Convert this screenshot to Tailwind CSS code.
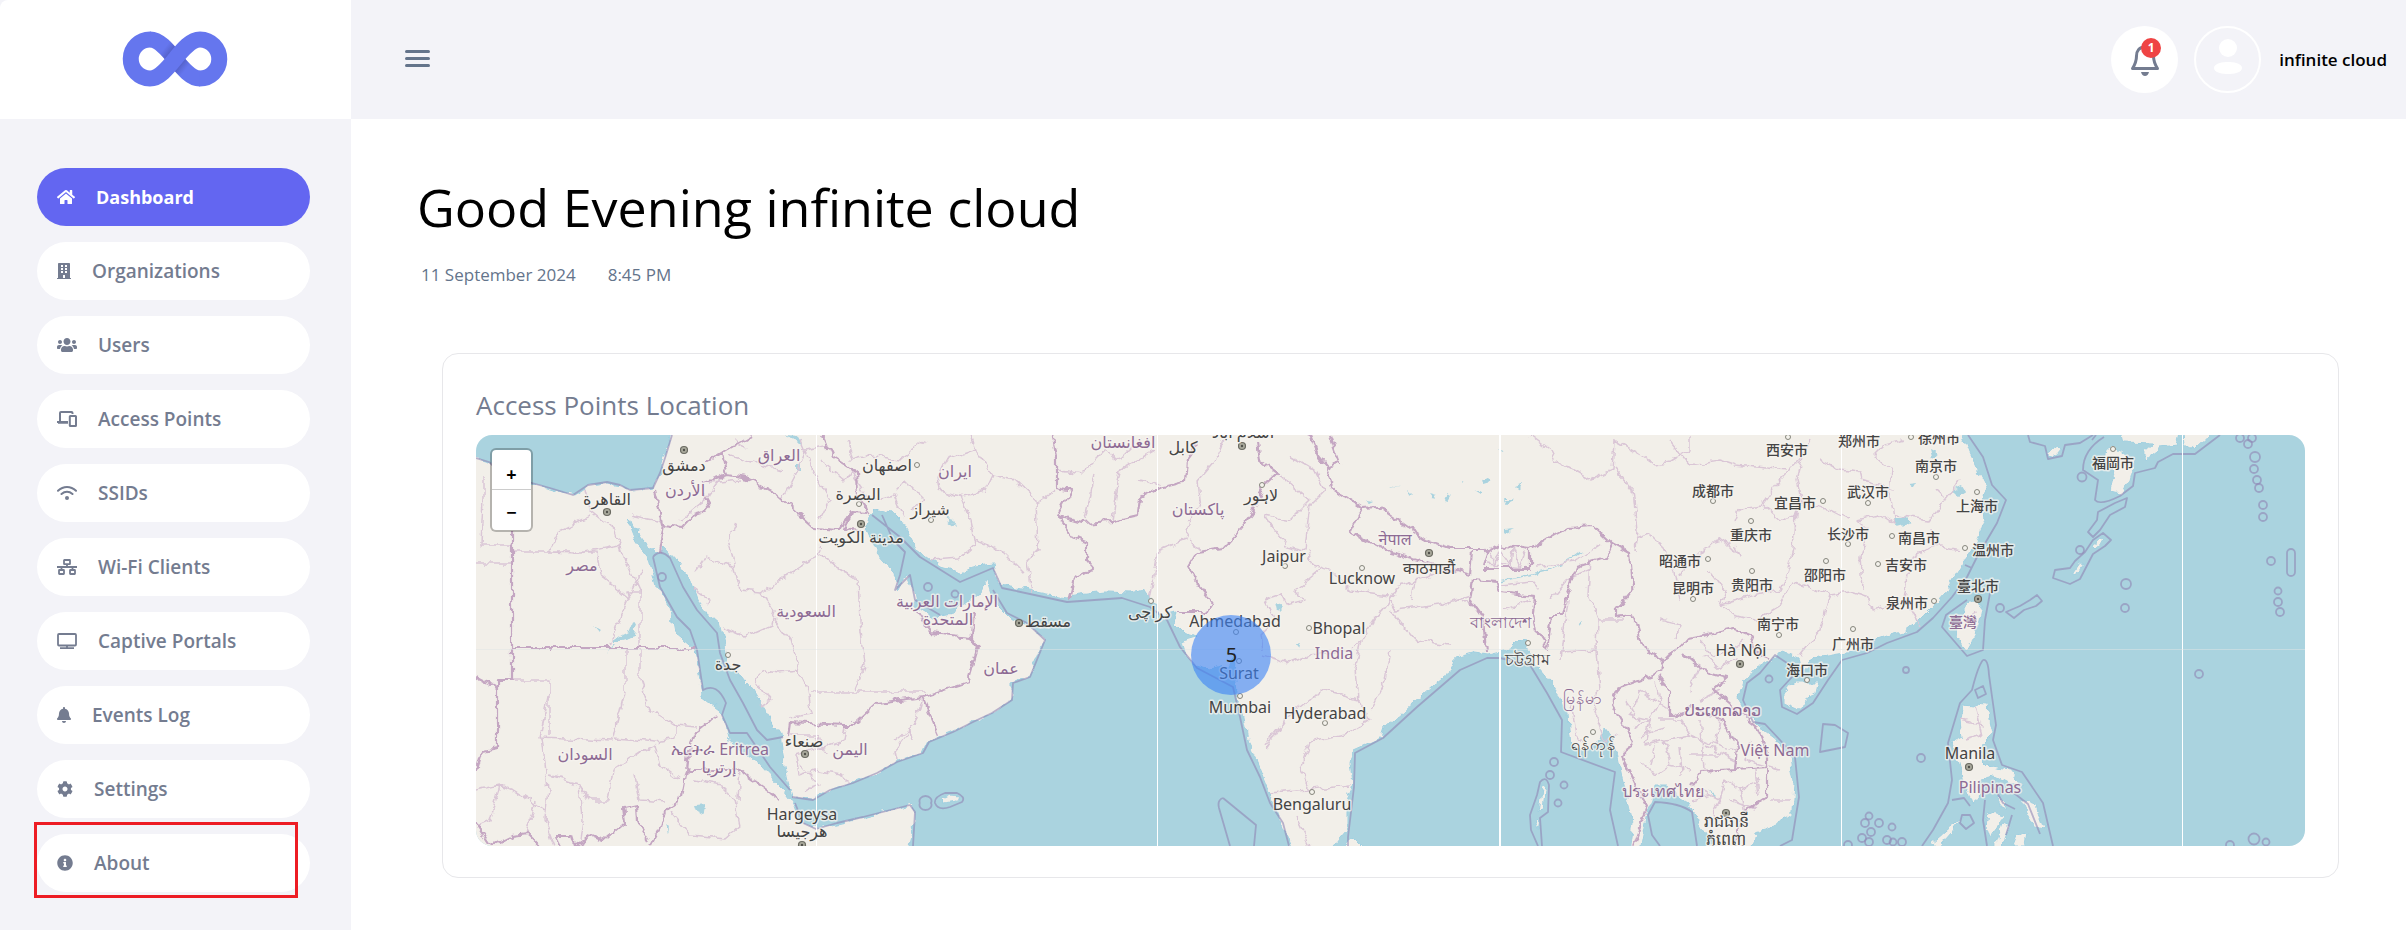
<!DOCTYPE html>
<html lang="en">
<head>
<meta charset="utf-8">
<title>Dashboard</title>
<script src="https://cdn.jsdelivr.net/npm/@tailwindcss/browser@4"></script>
</head>
<body class="bg-white font-['Open_Sans','Noto_Sans','Noto_Sans_CJK_SC',sans-serif] text-black">
<div class="flex min-h-screen">

  <!-- Sidebar -->
  <aside class="flex w-[351px] shrink-0 flex-col bg-[#f3f3f8]">
    <a href="#" aria-label="Home" class="flex h-[119px] items-center justify-center rounded-tl-lg bg-white pr-0.5 pb-0.5">
      <svg class="h-14 w-[106px]" viewBox="121.5 31.5 106 56" fill="none">
        <defs>
          <linearGradient id="s1" gradientUnits="userSpaceOnUse" x1="162" y1="51" x2="172" y2="59"><stop offset="0" stop-color="#4a55b5" stop-opacity="0"/><stop offset="1" stop-color="#4650a8"/></linearGradient>
          <linearGradient id="s2" gradientUnits="userSpaceOnUse" x1="187" y1="68" x2="177" y2="60"><stop offset="0" stop-color="#4a55b5" stop-opacity="0"/><stop offset="1" stop-color="#4650a8"/></linearGradient>
        </defs>
        <path d="M149.500 40C168 40 181 79 199.500 79" stroke="#6576ee" stroke-width="16"/>
        <path d="M149.500 40C168 40 181 79 199.500 79" stroke="url(#s1)" stroke-width="16" stroke-dasharray="32 100"/>
        <path d="M199.500 79C181 79 168 40 149.500 40" stroke="url(#s2)" stroke-width="16" stroke-dasharray="32 100"/>
        <path d="M150 40A19.500 19.500 0 1 0 149.500 79C168 79 181 40 199.500 40A19.500 19.500 0 1 1 199 79" stroke="#6576ee" stroke-width="16"/>
      </svg>
    </a>
    <nav class="mt-[49px] flex flex-col gap-4 pr-[41px] pl-[37px] text-[19px] font-semibold text-[#747c90]">
      <a href="#" aria-current="page" class="flex h-[58px] items-center gap-[21px] rounded-full bg-[#6366f1] px-5 text-lg font-bold text-white">
        <svg class="h-4 w-[18px]" viewBox="0 0 576 512" fill="currentColor"><path d="M280.37 148.26L96 300.11V464a16 16 0 0 0 16 16l112.06-.29a16 16 0 0 0 15.92-16V368a16 16 0 0 1 16-16h64a16 16 0 0 1 16 16v95.64a16 16 0 0 0 16 16.05L464 480a16 16 0 0 0 16-16V300L295.67 148.26a12.19 12.19 0 0 0-15.3 0zM571.6 251.47L488 182.56V44.05a12 12 0 0 0-12-12h-56a12 12 0 0 0-12 12v72.61L318.47 43a48 48 0 0 0-61 0L4.34 251.47a12 12 0 0 0-1.6 16.9l25.5 31A12 12 0 0 0 45.15 301l235.22-193.74a12.19 12.19 0 0 1 15.3 0L530.9 301a12 12 0 0 0 16.9-1.6l25.5-31a12 12 0 0 0-1.7-16.930z"/></svg>
        Dashboard</a>
      <a href="#" class="flex h-[58px] items-center gap-[21px] rounded-full bg-white px-5">
        <svg class="h-4 w-3.5" viewBox="0 0 448 512" fill="currentColor" fill-rule="evenodd"><path d="M436 480h-20V24c0-13-11-24-24-24H56C43 0 32 11 32 24v456H12c-7 0-12 5-12 12v20h448v-20c0-7-5-12-12-12zM128 64h64v64h-64zM256 64h64v64h-64zM128 160h64v64h-64zM256 160h64v64h-64zM128 256h64v64h-64zM256 256h64v64h-64zM192 480v-84c0-7 5-12 12-12h40c7 0 12 5 12 12v84z"/></svg>
        Organizations</a>
      <a href="#" class="flex h-[58px] items-center gap-[21px] rounded-full bg-white px-5">
        <svg class="h-4 w-5" viewBox="0 0 640 512" fill="currentColor"><path d="M96 224c35.300 0 64-28.700 64-64s-28.700-64-64-64-64 28.700-64 64 28.700 64 64 64zm448 0c35.300 0 64-28.700 64-64s-28.700-64-64-64-64 28.700-64 64 28.700 64 64 64zm32 32h-64c-17.600 0-33.500 7.100-45.100 18.600 40.300 22.100 68.900 62 75.100 109.400h66c17.700 0 32-14.300 32-32v-32c0-35.300-28.700-64-64-64zm-256 0c61.900 0 112-50.100 112-112S381.900 32 320 32 208 82.100 208 144s50.100 112 112 112zm76.800 32h-8.300c-20.800 10-43.900 16-68.500 16s-47.600-6-68.500-16h-8.300C179.600 288 128 339.600 128 403.200V432c0 26.500 21.500 48 48 48h288c26.500 0 48-21.500 48-48v-28.800c0-63.600-51.600-115.200-115.200-115.200zm-223.700-13.400C161.500 263.100 145.600 256 128 256H64c-35.300 0-64 28.700-64 64v32c0 17.700 14.300 32 32 32h65.900c6.300-47.400 34.900-87.300 75.200-109.400z"/></svg>
        Users</a>
      <a href="#" class="flex h-[58px] items-center gap-[21px] rounded-full bg-white px-5">
        <svg class="h-4 w-5" viewBox="0 0 20 16" fill="none" stroke="currentColor" stroke-width="2"><path d="M3 10V2q0-1 1-1h10.500q1 0 1 1v1M0 11h11" /><path d="M1 11.500h10" stroke-width="2.500"/><rect x="12.800" y="5" width="6.200" height="10" rx=".6"/></svg>
        Access Points</a>
      <a href="#" class="flex h-[58px] items-center gap-[21px] rounded-full bg-white px-5">
        <svg class="h-4 w-5" viewBox="0 0 20 16" fill="none" stroke="currentColor" stroke-width="2" stroke-linecap="round"><path d="M1 5.800Q5 2 10 2t9 3.800M4.500 9Q7 6.800 10 6.800T15.500 9"/><circle cx="10" cy="13" r="2" fill="currentColor" stroke="none"/></svg>
        SSIDs</a>
      <a href="#" class="flex h-[58px] items-center gap-[21px] rounded-full bg-white px-5">
        <svg class="h-4 w-5" viewBox="0 0 20 16" fill="none" stroke="currentColor" stroke-width="1.800"><rect x="7" y="1" width="6" height="4.200" rx=".4"/><rect x="2" y="11" width="5" height="4" rx=".4"/><rect x="13" y="11" width="5" height="4" rx=".4"/><path d="M0 8h20M10 5.500V8M4.500 8v3M15.500 8v3"/></svg>
        Wi-Fi Clients</a>
      <a href="#" class="flex h-[58px] items-center gap-[21px] rounded-full bg-white px-5">
        <svg class="h-4 w-5" viewBox="0 0 20 16" fill="none" stroke="currentColor" stroke-width="1.800"><rect x="1" y="1" width="18" height="11.500" rx="1"/><path d="M3 15.100h14M10 12.500v2"/></svg>
        Captive Portals</a>
      <a href="#" class="flex h-[58px] items-center gap-[21px] rounded-full bg-white px-5">
        <svg class="h-4 w-3.5" viewBox="0 0 448 512" fill="currentColor"><path d="M224 512c35.320 0 63.970-28.650 63.970-64H160.030c0 35.350 28.650 64 63.970 64zm215.390-149.710c-19.320-20.760-55.470-51.990-55.470-154.290 0-77.700-54.480-139.900-127.940-155.160V32c0-17.670-14.320-32-31.980-32s-31.980 14.330-31.980 32v20.840C118.560 68.100 64.080 130.300 64.080 208c0 102.300-36.150 133.530-55.470 154.290-6 6.450-8.660 14.160-8.610 21.710.11 16.400 12.980 32 32.100 32h383.800c19.120 0 32-15.600 32.100-32 .05-7.550-2.610-15.270-8.610-21.710z"/></svg>
        Events Log</a>
      <a href="#" class="flex h-[58px] items-center gap-[21px] rounded-full bg-white px-5">
        <svg class="size-4" viewBox="0 0 512 512" fill="currentColor"><path d="M487.400 315.700l-42.600-24.600c4.300-23.200 4.300-47 0-70.200l42.600-24.600c4.900-2.800 7.100-8.600 5.500-14-11.100-35.600-30-67.800-54.700-94.600-3.800-4.100-10-5.100-14.800-2.300L380.800 110c-17.900-15.400-38.500-27.300-60.800-35.100V25.800c0-5.600-3.900-10.500-9.400-11.700-36.700-8.200-74.300-7.800-109.200 0-5.500 1.200-9.400 6.100-9.400 11.700V75c-22.200 7.900-42.800 19.800-60.800 35.100L88.700 85.500c-4.900-2.800-11-1.900-14.800 2.300-24.700 26.700-43.600 58.900-54.700 94.600-1.700 5.400.6 11.200 5.500 14L67.300 221c-4.300 23.200-4.300 47 0 70.200l-42.600 24.600c-4.900 2.800-7.100 8.600-5.500 14 11.100 35.600 30 67.800 54.700 94.600 3.800 4.100 10 5.100 14.800 2.300l42.600-24.600c17.900 15.400 38.500 27.300 60.800 35.100v49.200c0 5.600 3.900 10.500 9.400 11.700 36.700 8.200 74.300 7.800 109.200 0 5.500-1.200 9.400-6.100 9.400-11.700v-49.200c22.200-7.900 42.800-19.800 60.800-35.100l42.600 24.600c4.900 2.800 11 1.900 14.800-2.300 24.700-26.700 43.600-58.900 54.700-94.600 1.500-5.500-.7-11.300-5.600-14.100zM256 336c-44.100 0-80-35.900-80-80s35.900-80 80-80 80 35.900 80 80-35.900 80-80 80z"/></svg>
        Settings</a>
      <a href="#" class="relative flex h-[58px] items-center gap-[21px] rounded-full bg-white px-5">
        <svg class="size-4" viewBox="0 0 512 512" fill="currentColor"><path d="M256 8C119.043 8 8 119.083 8 256c0 136.997 111.043 248 248 248s248-111.003 248-248C504 119.083 392.957 8 256 8zm0 110c23.196 0 42 18.804 42 42s-18.804 42-42 42-42-18.804-42-42 18.804-42 42-42zm56 254c0 6.627-5.373 12-12 12h-88c-6.627 0-12-5.373-12-12v-24c0-6.627 5.373-12 12-12h12v-64h-12c-6.627 0-12-5.373-12-12v-24c0-6.627 5.373-12 12-12h64c6.627 0 12 5.373 12 12v100h12c6.627 0 12 5.373 12 12v24z"/></svg>
        About
        <span class="pointer-events-none absolute -top-3 right-3 -bottom-1.5 -left-[3px] border-[3px] border-[#ed1c24]"></span>
      </a>
    </nav>
  </aside>

  <div class="flex min-w-0 flex-1 flex-col">
    <!-- Top bar -->
    <header class="flex h-[119px] items-center justify-between bg-[#f3f3f8] pr-[19px] pl-[54px]">
      <button type="button" aria-label="Toggle menu" class="flex w-[25px] flex-col gap-1 pb-0.5">
        <span class="h-[3px] rounded-full bg-[#64748b]"></span><span class="h-[3px] rounded-full bg-[#64748b]"></span><span class="h-[3px] rounded-full bg-[#64748b]"></span>
      </button>
      <div class="flex items-center">
        <button type="button" aria-label="Notifications, 1 new" class="relative flex size-[67px] items-center justify-center rounded-full bg-white text-[#747c90]">
          <svg class="h-8 w-[30px]" viewBox="0 0 30 32" fill="none" stroke="currentColor" stroke-width="3" stroke-linejoin="round"><path d="M15 3C9 3 6.500 7 6.500 12C6.500 18 5 20.500 2.500 24.500H27.500C25 20.500 23.500 18 23.500 12C23.500 7 21 3 15 3Z"/><path d="M11 28h8q-1 4-4 4t-4-4z" fill="currentColor" stroke="none"/></svg>
          <span class="absolute top-3 left-[30px] flex size-5 items-center justify-center rounded-full bg-[#ef4444] text-xs font-bold text-white">1</span>
        </button>
        <button type="button" aria-label="Profile" class="ml-4 flex size-[67px] items-center justify-center rounded-full border-2 border-white pb-2">
          <svg class="h-9 w-7" viewBox="0 0 28 36" fill="#fff"><circle cx="14" cy="10" r="9"/><rect x="0" y="24" width="28" height="12" rx="12" ry="6"/></svg>
        </button>
        <span class="ml-[18px] text-[17px] font-semibold">infinite cloud</span>
      </div>
    </header>

    <main class="px-[66px] pt-[53px] pb-10">
      <h1 class="text-[52px] leading-[70px]">Good Evening infinite cloud</h1>
      <p class="mt-[21px] flex gap-8 pl-1 text-[17px] leading-6 font-medium text-[#64748b]"><span>11 September 2024</span><span>8:45 PM</span></p>

      <section class="mt-[66px] mr-px ml-[25px] rounded-2xl border border-[#e7e7ea] px-[33px] pt-8 pb-[31px]">
        <h2 class="mb-[11px] text-[26px] leading-[38px] text-[#747c90]">Access Points Location</h2>
        <div class="relative overflow-hidden rounded-2xl bg-[#aad3df]">
          <svg class="block h-auto w-full" viewBox="476 435 1829 411" role="img" aria-label="Map of access points" fill="none" stroke-linejoin="round">
            <defs>
              <filter id="rough" filterUnits="userSpaceOnUse" x="460" y="420" width="1860" height="440"><feTurbulence type="fractalNoise" baseFrequency=".09" numOctaves="3" seed="4"/><feDisplacementMap in="SourceGraphic" scale="9" xChannelSelector="R" yChannelSelector="G"/></filter>
              <g id="cap"><circle r="3.500" fill="#a9a99c" stroke="#6b6b62" stroke-width="1.200"/><circle r="1.200" fill="#50504a"/></g>
              <circle id="c" r="2.500" fill="#f4f2ec" stroke="#85857c" stroke-width="1"/>
            </defs>
            <!-- Land -->
            <g fill="#f2efe9" stroke="#9fcfe0" stroke-width="1" filter="url(#rough)">
              <path d="M460 455L476 458 489 462 500 472 532 483 550 488 573 495 588 485 607 483 620 485 630 490 653 488 660 473 663 460 670 443 673 425 1958 425 1963 435 1970 453 1980 475 1986 487 1983 503 1985 517 1978 537 1970 553 1960 567 1952 580 1945 593 1933 607 1917 623 1903 633 1887 637 1873 642 1853 652 1833 655 1813 658 1807 668 1800 667 1798 658 1783 652 1772 658 1757 667 1745 680 1739 697 1748 713 1760 727 1777 740 1790 757 1794 783 1792 813 1767 830 1755 833 1750 860 1725 860 1705 833 1697 820 1688 803 1673 793 1667 785 1655 785 1653 800 1647 813 1643 833 1638 860 1628 860 1633 823 1627 797 1622 777 1617 753 1612 737 1605 727 1602 740 1587 750 1570 745 1568 730 1567 713 1562 697 1550 682 1538 668 1530 657 1523 637 1513 647 1500 652 1488 655 1473 653 1455 658 1452 670 1433 685 1413 703 1385 728 1382 737 1353 750 1350 763 1353 783 1347 803 1347 830 1333 846 1330 860 1296 860 1280 820 1270 793 1258 763 1248 743 1242 713 1237 693 1235 673 1237 653 1228 665 1210 670 1193 665 1183 653 1180 642 1198 637 1183 633 1173 623 1175 613 1165 615 1157 608 1145 590 1130 593 1107 592 1080 595 1067 597 1043 593 1017 588 1000 585 993 565 975 567 960 573 940 567 917 550 910 537 900 520 892 512 877 510 870 517 867 530 877 553 892 570 898 590 907 573 913 587 917 607 933 617 953 613 973 597 987 580 993 600 1010 617 1027 623 1045 640 1037 660 1028 677 1012 683 1012 700 992 713 973 722 953 732 928 742 923 753 897 762 877 773 853 783 830 790 813 799 793 798 788 783 782 750 780 733 763 707 753 690 740 675 727 665 725 643 720 623 707 612 697 600 690 580 678 563 663 547 657 553 643 540 627 517 637 543 650 560 657 587 670 607 675 633 695 650 697 657 702 697 723 713 728 740 757 763 783 790 793 803 800 823 813 828 837 823 863 817 910 805 915 810 913 830 905 860 460 860Z"/>
              <path d="M1783 690 1797 682 1818 682 1815 695 1797 709 1783 703ZM1978 599 1982 606 1976 635 1967 650 1957 637 1959 620 1968 603Z"/>
              <path d="M1963 703 1988 705 1990 720 1993 733 1983 743 1980 757 1990 767 2010 770 2022 785 2008 783 1994 776 1980 779 1978 800 1972 805 1963 780 1957 757 1952 742 1962 737 1960 720ZM1988 812 2003 816 1998 828 1990 838 1986 826ZM2003 823 2010 826 2002 846 1994 848ZM2020 800 2036 806 2044 828 2033 826ZM2016 836 2026 834 2024 846 2012 846ZM1997 795 2008 806 2000 806ZM1932 843 1952 826 1963 818 1950 834 1936 850Z"/>
              <path d="M2105 452 2113 445 2127 456 2135 461 2130 480 2123 494 2110 491 2115 470 2103 461ZM2120 430 2182 425 2177 445 2162 447 2147 459 2143 452 2153 443 2123 442ZM2184 430 2216 428 2193 450 2185 445ZM2047 453 2054 448 2061 450 2056 456ZM2073 573 2080 563 2084 564 2076 575ZM2093 545 2100 539 2104 541 2096 548ZM940 799 948 795 960 796 956 801 944 803ZM1343 846 1354 838 1366 850Z"/>
              <path d="M1543 783 1546 785 1543 808 1539 812ZM1535 824 1539 820 1537 832Z"/>
            </g>
            <!-- Inland water -->
            <g fill="#aad3df" filter="url(#rough)"><path d="M593 624l8 5-2 2zM612 641l10-6 8-4 4-10 3 2-2 14-14 4zM607 652l8-10 1 1zM696 805l9-1-1 8-5 2zM787 435l10 8 5 2-5-9zM666 824l3 3-1 8zM795 465h5v4h-5zM944 517l10 3 2 6zM1952 490l10-4 3 5-6 4zM1893 520l10-5 8 8-15 4zM1909 483l8-1-3 5zM1930 450l8 4-6 4zM1504 500h10l-8 4zM1430 495l7 2-3 3zM1445 500l3-6 3 2-3 5zM1480 480l8-2 2 5-7 2zM1390 485l12 2-10-1zM1366 500l8 1-4 2zM1498 449l8 2-4 2zM1408 490l4 4-3 3zM1505 531l10-1-8 4zM1462 480l3 1-2 2zM1472 490l10 3-2 2zM1515 485l6-2-2 6zM1678 545l4 1zM1709 789l9 8-1 2zM1580 624l3-2-1 5zM1296 644l4-1-2 6zM1276 602l5 6-3 3z"/></g>
            <path d="M1500 581q30-6 46-10t36-20" stroke="#aad3df" stroke-width="1.500" filter="url(#rough)"/>
            <!-- Regional boundaries -->
            <g stroke="#dac6d6" stroke-width="1.500" filter="url(#rough)">
              <path d="M476 564H512M484 475V498L482 545H512M512 552H597L600 575 630 600 628 592 640 592V648M640 592 625 560 620 545 580 553 548 552 560 530 590 515M641 570 632 590 610 645M585 488 590 510 615 530 622 552M630 515 663 522M625 648V690L613 740 540 737 550 690 550 680 512 680M640 650V680L650 710 675 725 697 727M675 725 675 738 655 742 615 738M550 680V735M542 737 548 790 545 820 555 846M550 775 580 785 590 800 608 800 613 770 640 752 655 745M635 775 640 800 665 802M655 745 660 765 680 780M695 780 720 785 735 800 740 825 725 838 690 835 670 812M740 770 738 800M500 785 476 790M500 785 490 820 476 826M500 785 513 790 545 810M527 833 535 800M580 785 583 820 580 840"/>
              <path d="M723 475 705 500 680 520M782 500 795 475 805 450 830 445M710 483 740 480M693 588 710 600 707 605M698 570 706 557 735 568 733 558 728 540 735 523M735 568 740 590 762 592 780 580 812 560 820 545M762 592 775 610 772 625 745 637 725 628M775 620 790 640 798 670 808 690 812 715 790 718M755 680 765 670 780 672 798 670M755 680 770 700 760 705M812 692 925 692M855 690 865 665 860 620 858 580 835 565 815 552M912 742 910 730 895 750 897 760 M923 697 915 725 895 740 M845 725 843 740 820 748 795 755 798 775 813 770 840 775 850 785M800 765 820 785 805 790M790 735 818 735 825 755M780 470 730 455M745 450 735 440M847 440 852 460 870 455 900 460 925 440M850 470 870 500 895 495 905 520M820 460 845 480 850 470M895 490 905 480 925 500 912 510M800 440 815 475 830 500 820 520"/>
              <path d="M938 475 945 460 975 450 992 475 1015 480 1036 500 1038 550 1028 560 1032 595M975 450 970 435M938 475 940 490 960 495 970 520 975 545 960 558 930 560M992 475 985 490 962 495M975 540 1000 550 1025 575M1036 503 1055 490M1057 470 1080 475 1105 450 1120 460 1140 440M1085 520 1095 475M1113 520 1120 470 1155 450M1139 480 1160 485M1158 550 1150 600M1158 550 1185 540 1190 520 1200 500 1198 480 1215 460 1225 435M1190 540 1200 550M1265 515 1290 520 1300 510 1310 500 1285 480 1280 475M1265 515 1285 545 1305 550 1308 520 1310 505 1325 490 1315 470 1290 455M1308 550 1313 565 1330 570 1350 590 1390 595M1295 590 1320 570M1295 590 1305 600 1285 605 1280 595 1265 600 1275 620 1260 635 1262 650M1262 655 1290 663 1310 655 1350 650 1362 640 1375 620 1390 600 1400 585 1415 580 1450 570M1390 600 1395 610 1440 605 1470 595M1390 610 1415 640 1450 645M1362 640 1355 670 1358 700 1370 720M1358 700 1320 690 1310 700 1285 720 1265 750M1310 742 1345 735 1368 720M1265 745 1280 725M1310 742 1300 770 1310 790 1350 785M1270 793 1310 790M1295 815 1310 846M1390 650 1385 680 1370 710M1412 600 1415 580M1490 548 1495 565 1500 550 1510 565 1512 548 1520 568 1525 552M1487 563 1530 568M1500 585 1533 582 1540 590M1505 610 1530 600M1483 620 1475 605 1462 600M1550 600 1567 580 1590 570M1535 567 1575 562 1600 545M1568 600 1562 645 1560 660M1590 560 1588 595 1598 620 1597 650 1560 652M1598 620 1625 620M1597 650 1600 690 1590 700 1605 740M1570 700 1575 735 1585 745"/>
              <path d="M1530 435 1550 450 1555 460 1590 480 1612 470 1614 440 1640 455 1655 465 1670 462 1690 450 1690 435M1670 440 1690 465 1720 460 1735 465 1787 470M1614 468 1633 490 1637 530 1635 550M1635 540 1650 535 1665 550 1675 570 1680 600M1680 575 1710 545 1725 540 1740 555 1735 545M1735 520 1740 508 1762 505 1780 480 1800 460 1810 440M1762 505 1780 520 1795 515 1800 500 1830 510 1850 520M1795 515 1793 550 1785 580 1780 590 1755 595 1720 605M1720 605 1725 590 1710 570M1720 605 1735 615 1755 620 1780 605 1793 582M1793 582 1815 590 1830 595 1820 630 1800 655M1830 595 1850 592 1870 598 1872 610 1890 605M1860 555 1862 590M1860 555 1868 530 1858 520 1880 515 1895 525 1890 490 1892 470 1875 455 1885 445 1905 440M1820 460 1840 470 1860 472 1862 480 1895 490M1895 515 1930 520 1945 500 1935 490M1930 530 1935 545 1910 560 1905 600 1920 625M1945 500 1960 480M1935 545 1960 550M1803 457 1797 480 1802 505"/>
              <path d="M1605 740 1620 735M1640 690 1630 715 1650 720 1660 700 1655 680M1650 720 1645 745 1665 740 1690 735 1680 720M1665 740 1670 765 1690 770M1640 760 1655 775 1670 765M1700 720 1705 770M1720 720 1715 745 1735 750M1690 735 1715 745M1640 690 1670 710M1625 700 1640 720M1690 690 1700 665M1720 690 1700 700M1720 800 1725 780 1740 790 1760 780M1740 790 1745 815M1700 790 1720 800 1710 820M1750 740 1745 760 1780 770M1770 800 1790 800M1700 640 1712 655 1730 650 1745 640M1960 720 1985 725M1965 740 1982 735 1975 705M1675 640 1680 625 1660 620M1970 625 1975 610M1650 720 1632 728M1655 745 1652 765M1680 745 1682 775M1660 720 1680 720M1705 745 1735 760M1690 755 1720 755M1640 735 1665 728M1755 770 1758 795M1730 800 1755 810M1692 800 1710 795M1705 655 1720 668 1735 660"/>
            </g>
            <!-- National borders -->
            <g stroke="#c4a6c2" stroke-width="2.200" filter="url(#rough)">
              <path d="M512 532V680H497V749L482 752 477 770M512 648H695M476 677 497 688M655 490 663 525 658 552M663 525 682 527 693 515 703 512 710 503 704 492M703 483 728 475 723 453M728 475 747 478 777 495 813 527 840 529 850 512 867 513M707 462 753 435M823 435 833 457 857 473 858 497 870 515M850 512 845 528 862 530M790 722 843 725 853 725 877 703 923 697 968 682 978 648 971 637 930 633 917 612M923 697 939 735M971 637 973 610M790 722 788 737M717 715 695 733 690 745 687 770 682 797 665 810 660 827 650 846M687 770 740 770 780 800M476 823 491 846 513 835 527 833 540 846M560 846 555 836 572 836 575 846 590 836 603 842 625 823 623 808 637 805 638 823 648 840"/>
              <path d="M1052 435 1057 457 1057 487 1072 490 1058 516 1082 523 1113 521 1139 515 1141 498 1160 488 1185 482 1187 460 1198 445M1058 516 1073 537 1087 543 1087 560 1093 567 1073 578 1068 600M1257 440 1260 460 1278 473 1263 487 1253 512 1233 537 1223 548 1197 552 1188 567 1197 583 1212 603 1207 612 1177 612M1330 435 1340 463 1325 468 1332 488 1362 508 1380 507 1427 540 1450 548 1482 548 1487 553 1500 545 1530 550 1550 537 1568 527 1593 525 1612 543 1630 553 1633 587 1617 607 1617 617 1633 615 1643 647 1663 660 1677 650 1687 638 1713 633 1733 628 1755 637 1750 650 1767 658M1362 508 1350 532 1390 553 1410 558 1470 575 1472 550M1473 580 1470 600 1483 617 1486 653M1473 580 1497 582 1500 593 1535 597 1533 613 1537 633 1547 648 1552 617M1612 543 1605 558 1577 567 1567 593 1562 617 1548 617M1483 565 1487 553M1483 568H1530V550"/>
              <path d="M1663 660 1660 672 1620 687 1612 705 1633 740 1623 757 1647 807 1633 846M1660 677 1670 690 1670 717 1693 707 1723 720 1737 747 1735 770 1700 772 1690 787M1683 653 1703 670 1727 677 1713 690 1757 727 1767 753 1767 797 1743 813 1735 840M1735 770 1767 768M1310 435 1318 455 1330 470"/>
            </g>
            <!-- Maritime boundaries -->
            <g stroke="#8f86b4" stroke-opacity=".6" stroke-width="1.800">
              <path d="M476 458 489 462 500 472 532 483 550 488 573 495 588 485 607 482 620 485 630 490 653 488 660 473 666 455 672 435M653 557 660 587 677 617 690 630 697 650 703 690 Q717 682 726 703L722 715 730 733 747 733 770 767 790 790M653 557Q660 548 670 558L683 587 697 610 717 633 720 653 730 680 743 703 757 730 767 740 783 737M792 797 813 800 830 790 853 783 877 773 897 762 923 753 929 742 953 732 973 722 992 713 1012 700 1013 683 1030 677 1045 640 1027 623 1007 613 993 590M795 803 803 823 816 829 837 823 863 817 910 805 915 812 913 846M872 515 900 537 920 557 960 582 993 568 1002 588 1067 602 1122 598 1150 607 1167 620 1180 647 1197 668 1233 687 1240 717 1247 750 1260 777 1270 803 1283 823 1289 846M882 515 893 540 905 552 900 575 895 590 910 575 915 600 940 615"/>
              <path d="M1223 798 1256 825 1254 846M1223 798Q1217 800 1219 808L1230 846M920 803A6 5 0 1 1 931 803 6 5 0 1 1 920 803M935 803Q934 797 945 793L957 793Q966 797 962 802L950 807Q938 811 935 803Z"/>
              <path d="M1348 846V837L1354 787 1355 753 1383 738 1417 707 1460 670 1487 658 1500 658 1530 665 1547 693 1562 720 1561 752 1615 772 1610 810 1618 846M1538 846 1531 830 1530 815 1537 795 1540 782Q1546 775 1549 785L1548 812 1540 818 1542 846M1697 846 1692 812Q1680 803 1655 802L1648 815 1652 835 1660 846"/>
              <path d="M1968 435 1983 457 1992 485 2006 500 1997 523 1977 557 1967 577 1952 597 1933 618 1917 632 1887 643 1867 653 1842 660 1828 680 1813 703 1797 714 1782 707 1780 690 1792 677 1790 665 1775 655 1760 673 1747 683 1743 700 1753 722 1765 724 1780 740 1795 757 1799 797 1792 840 1780 846M1990 593 1985 620 1983 650 1967 656 1942 627 1946 615 1967 600M1965 565 1972 568"/>
              <path d="M1983 660Q1988 658 1989 675L1996 725 1993 740 2002 765 2022 772 2043 803 2053 846M1983 660Q1978 666 1972 690L1960 703 1948 743 1952 780 1948 803 1933 830 1922 846M1823 724 1835 725 1848 733 1845 747 1820 752ZM1975 690l8-4 3 8-8 4zM1985 785l10 4 8 14 12 6M1952 800l12-2 6 8M1962 815l8 0 4 8-8 6-6-6zM1985 800l-2 20 4 26M2010 790l18 14 12 30M2012 815l-6 20"/>
              <path d="M2028 435 2030 442 2045 446 2048 459 2062 456 2065 445 2080 443 2093 435M2092 440 2096 435M2104 437Q2083 450 2083 470L2098 480 2095 500Q2100 506 2120 496L2133 486 2135 473 2155 468 2158 462 2173 454 2195 454 2220 435M2127 498 2125 507 2110 515 2100 530 2093 537 2088 532 2097 520 2098 512 2115 503ZM2055 570 2070 568 2075 561 2085 552 2093 540 2103 533 2111 540 2105 546 2093 554 2080 579 2070 584 2053 578ZM2006 612 2020 606 2030 600 2037 595 2042 601 2036 606 2024 610 2014 618Z"/>
              <circle cx="662" cy="577" r="4"/><circle cx="928" cy="587" r="4"/><circle cx="955" cy="594" r="3.500"/><circle cx="1554" cy="762" r="4"/><circle cx="1550" cy="775" r="4"/><circle cx="1564" cy="785" r="3.500"/><circle cx="1558" cy="803" r="3.500"/><circle cx="1769" cy="679" r="3.500"/><circle cx="1906" cy="670" r="3"/><circle cx="1921" cy="758" r="4"/><circle cx="2000" cy="608" r="4"/><circle cx="2082" cy="477" r="4.500"/><circle cx="2080" cy="550" r="4"/><circle cx="2126" cy="584" r="5"/><circle cx="2125" cy="608" r="4"/><circle cx="2240" cy="438" r="4"/><circle cx="2248" cy="444" r="4"/><circle cx="2252" cy="438" r="4"/><circle cx="2255" cy="457" r="5"/><circle cx="2254" cy="469" r="4"/><circle cx="2257" cy="480" r="4"/><circle cx="2259" cy="488" r="4"/><circle cx="2263" cy="505" r="4"/><circle cx="2263" cy="517" r="4"/><circle cx="2271" cy="561" r="4"/><rect x="2287" y="549" width="8" height="27" rx="4"/><circle cx="2278" cy="591" r="3.500"/><circle cx="2278" cy="602" r="4"/><circle cx="2280" cy="612" r="4"/><circle cx="2199" cy="674" r="4"/><circle cx="2254" cy="839" r="5.500"/><circle cx="2266" cy="842" r="3.500"/><circle cx="2230" cy="845" r="4"/><circle cx="1869" cy="816" r="3.500"/><circle cx="1865" cy="823" r="4"/><circle cx="1879" cy="823" r="4"/><circle cx="1892" cy="827" r="3.500"/><circle cx="1862" cy="838" r="4"/><circle cx="1871" cy="832" r="4"/><circle cx="1869" cy="842" r="4"/><circle cx="1887" cy="840" r="4"/><circle cx="1893" cy="842" r="3.500"/><circle cx="1902" cy="842" r="4"/><circle cx="1848" cy="845" r="4"/>
            </g>
            <!-- Tile seams -->
            <path d="M816.500 435V846M1157.500 435V846M1841.500 435V846M2182.500 435V846" stroke="#fff"/>
            <path d="M1500 435V846" stroke="#fff" stroke-width="2"/>
            <path d="M476 649.500H2305" stroke="#dfe6e6" stroke-opacity=".5"/>
            <!-- Town markers -->
            <use href="#cap" x="684" y="450"/><use href="#cap" x="607" y="512"/><use href="#cap" x="861" y="524"/><use href="#cap" x="1019" y="623"/><use href="#cap" x="1242" y="446"/><use href="#cap" x="805" y="754"/><use href="#cap" x="802" y="845"/><use href="#cap" x="1429" y="553"/><use href="#cap" x="1740" y="664"/><use href="#cap" x="1726" y="813"/><use href="#cap" x="1978" y="599"/><use href="#cap" x="1969" y="767"/>
            <use href="#c" x="917" y="465"/><use href="#c" x="859" y="504"/><use href="#c" x="931" y="520"/><use href="#c" x="1262" y="485"/><use href="#c" x="1151" y="601"/><use href="#c" x="1285" y="566"/><use href="#c" x="1362" y="568"/><use href="#c" x="1309" y="628"/><use href="#c" x="1239" y="661"/><use href="#c" x="1236" y="632"/><use href="#c" x="1240" y="696"/><use href="#c" x="1325" y="723"/><use href="#c" x="1312" y="792"/><use href="#c" x="728" y="655"/><use href="#c" x="1528" y="643"/><use href="#c" x="1593" y="732"/><use href="#c" x="1713" y="501"/><use href="#c" x="1751" y="521"/><use href="#c" x="1708" y="559"/><use href="#c" x="1693" y="599"/><use href="#c" x="1752" y="571"/><use href="#c" x="1788" y="437"/><use href="#c" x="1911" y="437"/><use href="#c" x="1936" y="477"/><use href="#c" x="1977" y="492"/><use href="#c" x="1868" y="503"/><use href="#c" x="1823" y="501"/><use href="#c" x="1848" y="544"/><use href="#c" x="1892" y="536"/><use href="#c" x="1965" y="548"/><use href="#c" x="1878" y="564"/><use href="#c" x="1826" y="561"/><use href="#c" x="1934" y="601"/><use href="#c" x="1779" y="635"/><use href="#c" x="1853" y="629"/><use href="#c" x="1807" y="680"/><use href="#c" x="2113" y="449"/>
            <!-- Labels -->
            <g text-anchor="middle" font-family="'Noto Sans','DejaVu Sans','Noto Sans CJK SC',sans-serif" stroke="#f6f4ef" stroke-opacity=".75" stroke-width="3" paint-order="stroke">
              <g fill="#444" font-size="16">
                <text x="684" y="471">دمشق</text><text x="607" y="505">القاهرة</text><text x="887" y="471">اصفهان</text><text x="858" y="500">البصرة</text><text x="861" y="543">مدينة الكويت</text><text x="930" y="515">شیراز</text><text x="1048" y="627">مسقط</text><text x="1183" y="453">کابل</text><text x="1243" y="438">اسلام آباد</text><text x="1261" y="501">لاہور</text><text x="1150" y="618">کراچی</text><text x="728" y="670">جدة</text><text x="804" y="747">صنعاء</text><text x="802" y="820">Hargeysa</text><text x="802" y="837">هرجيسا</text>
                <text x="1284" y="562">Jaipur</text><text x="1362" y="584">Lucknow</text><text x="1339" y="634">Bhopal</text><text x="1235" y="627">Ahmedabad</text><text x="1239" y="679">Surat</text><text x="1240" y="713">Mumbai</text><text x="1325" y="719">Hyderabad</text><text x="1312" y="810">Bengaluru</text><text x="1429" y="574">काठमाडौं</text><text x="1527" y="665">চট্টগ্রাম</text><text x="1593" y="750">ရန်ကုန်</text><text x="1741" y="656">Hà Nội</text><text x="1726" y="827">រាជធានី</text><text x="1726" y="845">ភ្នំពេញ</text><text x="1970" y="759">Manila</text>
              </g>
              <g fill="#444" font-size="14" font-weight="500" font-family="'Noto Sans CJK SC',sans-serif">
                <text x="1713" y="496">成都市</text><text x="1751" y="540">重庆市</text><text x="1680" y="566">昭通市</text><text x="1693" y="593">昆明市</text><text x="1752" y="590">贵阳市</text><text x="1787" y="455">西安市</text><text x="1859" y="446">郑州市</text><text x="1939" y="443">徐州市</text><text x="1936" y="471">南京市</text><text x="1977" y="511">上海市</text><text x="1868" y="497">武汉市</text><text x="1795" y="508">宜昌市</text><text x="1848" y="539">长沙市</text><text x="1919" y="543">南昌市</text><text x="1993" y="555">温州市</text><text x="1906" y="570">吉安市</text><text x="1825" y="580">邵阳市</text><text x="1907" y="608">泉州市</text><text x="1978" y="591">臺北市</text><text x="1778" y="629">南宁市</text><text x="1853" y="649">广州市</text><text x="1807" y="675">海口市</text><text x="2113" y="468">福岡市</text><text x="1963" y="627" fill="#8d6a94">臺灣</text>
              </g>
              <g fill="#8d6a94" font-size="16">
                <text x="779" y="461">العراق</text><text x="685" y="496">الأردن</text><text x="582" y="571">مصر</text><text x="806" y="617">السعودية</text><text x="947" y="607">الإمارات العربية</text><text x="948" y="625">المتحدة</text><text x="1001" y="674">عمان</text><text x="955" y="477">ایران</text><text x="1123" y="448">افغانستان</text><text x="1198" y="515">پاکستان</text><text x="585" y="760">السودان</text><text x="720" y="755">ኤርትራ Eritrea</text><text x="719" y="773">إرتريا</text><text x="850" y="755">اليمن</text><text x="1334" y="659">India</text><text x="1395" y="545">नेपाल</text><text x="1500" y="628">বাংলাদেশ</text><text x="1582" y="704">မြန်မာ</text><text x="1723" y="716">ປະເທດລາວ</text><text x="1663" y="797">ประเทศไทย</text><text x="1775" y="756">Việt Nam</text><text x="1990" y="793">Pilipinas</text>
              </g>
            </g>
          </svg>
          <button type="button" aria-label="5 access points" class="absolute top-[53.5%] left-[41.3%] flex size-20 -translate-x-1/2 -translate-y-1/2 items-center justify-center rounded-full bg-[#3b82f6]/60 font-['Noto_Sans',sans-serif] text-xl font-normal text-[#222]">5</button>
          <div class="absolute top-[13px] left-3.5 flex w-[43px] flex-col overflow-hidden rounded-md border-2 border-black/25 bg-white bg-clip-padding text-lg font-bold">
            <button type="button" aria-label="Zoom in" class="h-10 border-b border-[#ccc] pt-2 leading-8">+</button>
            <button type="button" aria-label="Zoom out" class="h-10 pt-1 leading-8">−</button>
          </div>
        </div>
      </section>
    </main>
  </div>
</div>
</body>
</html>
